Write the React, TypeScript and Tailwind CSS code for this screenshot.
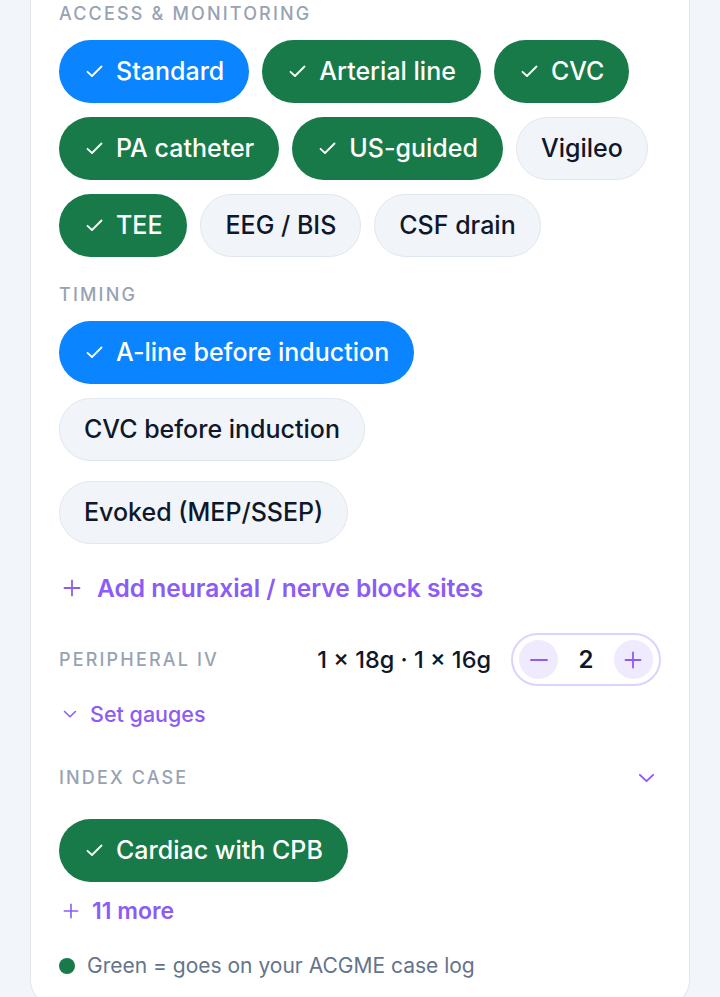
import React from "react";

type ChipTone = "blue" | "green" | "plain";

function CheckMark() {
    return (
        <svg width="17" height="13" viewBox="0 0 17 13" fill="none" className="shrink-0">
            <path d="M1.5 6.8 L6 11 L15.5 1.5" stroke="currentColor" strokeWidth="1.8" strokeLinecap="round" strokeLinejoin="round" />
        </svg>
    );
}

function Chip({ label, tone }: { label: string; tone: ChipTone }) {
    const base = "h-[63px] rounded-full flex items-center gap-[13px] text-[25px] font-medium whitespace-nowrap";
    if (tone === "plain") {
        return (
            <div className={`${base} px-[24px] bg-[#f1f4f9] border border-[#e1e7ef] text-[#0f172a]`}>
                {label}
            </div>
        );
    }
    return (
        <div className={`${base} ${tone === "blue" ? "bg-[#0a84ff]" : "bg-[#187a48]"} text-white pl-[27px] pr-[25px]`}>
            <CheckMark />
            {label}
        </div>
    );
}

function Label({ children }: { children: React.ReactNode }) {
    return (
        <div className="text-[18px] leading-[24px] font-medium tracking-[0.12em] text-[#97a3b3] uppercase">
            {children}
        </div>
    );
}

function PlusIcon({ size = 18 }: { size?: number }) {
    return (
        <svg width={size} height={size} viewBox="0 0 18 18" fill="none" className="shrink-0">
            <path d="M9 1.5 V16.5 M1.5 9 H16.5" stroke="currentColor" strokeWidth="1.8" strokeLinecap="round" />
        </svg>
    );
}

function ChevronDown({ size = 16 }: { size?: number }) {
    return (
        <svg width={size} height={size * 0.6} viewBox="0 0 16 10" fill="none" className="shrink-0">
            <path d="M1.5 1.8 L8 8 L14.5 1.8" stroke="currentColor" strokeWidth="1.9" strokeLinecap="round" strokeLinejoin="round" />
        </svg>
    );
}

export default function App() {
    return (
        <div className="min-h-screen bg-[#f2f5f9] px-[30px]" style={{ fontFamily: "Inter, 'Noto Sans', sans-serif" }}>
            <div className="bg-white border border-t-0 border-[#e2e7ee] rounded-b-[28px] px-[28px] pt-[2px] pb-[28px]">

                {/* ACCESS & MONITORING */}
                <Label>Access &amp; Monitoring</Label>
                <div className="flex flex-wrap gap-x-[13px] gap-y-[14px] mt-[14px]">
                    <Chip label="Standard" tone="blue" />
                    <Chip label="Arterial line" tone="green" />
                    <Chip label="CVC" tone="green" />
                    <Chip label="PA catheter" tone="green" />
                    <Chip label="US-guided" tone="green" />
                    <Chip label="Vigileo" tone="plain" />
                    <Chip label="TEE" tone="green" />
                    <Chip label="EEG / BIS" tone="plain" />
                    <Chip label="CSF drain" tone="plain" />
                </div>

                {/* TIMING */}
                <div className="mt-[26px]">
                    <Label>Timing</Label>
                </div>
                <div className="flex flex-wrap gap-x-[13px] gap-y-[14px] mt-[14px]">
                    <Chip label="A-line before induction" tone="blue" />
                    <Chip label="CVC before induction" tone="plain" />
                </div>
                <div className="flex flex-wrap mt-[20px]">
                    <Chip label="Evoked (MEP/SSEP)" tone="plain" />
                </div>

                <div className="flex items-center gap-[16px] mt-[29px] pl-[4px] text-[#8b5cf6] text-[24.5px] leading-[30px] font-semibold">
                    <PlusIcon />
                    <span>Add neuraxial / nerve block sites</span>
                </div>

                {/* PERIPHERAL IV */}
                <div className="flex items-center mt-[30px]">
                    <div className="flex-1">
                        <Label>Peripheral IV</Label>
                    </div>
                    <div className="text-[23.5px] font-medium text-[#0f172a] mr-[20px]">1 × 18g · 1 × 16g</div>
                    <div className="h-[53px] w-[150px] rounded-full border-2 border-[#dcd2fd] flex items-center justify-between px-[6px]">
                        <button className="w-[39px] h-[39px] rounded-full bg-[#efeafe] text-[#8b5cf6] flex items-center justify-center">
                            <svg width="18" height="2" viewBox="0 0 18 2"><path d="M1 1 H17" stroke="currentColor" strokeWidth="1.8" strokeLinecap="round" /></svg>
                        </button>
                        <span className="text-[24px] font-semibold text-[#0f172a]">2</span>
                        <button className="w-[39px] h-[39px] rounded-full bg-[#efeafe] text-[#8b5cf6] flex items-center justify-center">
                            <PlusIcon />
                        </button>
                    </div>
                </div>

                <div className="flex items-center gap-[13px] mt-[14px] pl-[4px] text-[#8b5cf6] text-[21.5px] leading-[28px] font-medium">
                    <ChevronDown size={14} />
                    <span>Set gauges</span>
                </div>

                {/* INDEX CASE */}
                <div className="flex items-center justify-between mt-[38px] pr-[6px]">
                    <Label>Index Case</Label>
                    <span className="text-[#8b5cf6]"><ChevronDown size={17} /></span>
                </div>
                <div className="flex flex-wrap mt-[29px]">
                    <Chip label="Cardiac with CPB" tone="green" />
                </div>

                <div className="flex items-center gap-[13px] mt-[15px] pl-[4px] text-[#8b5cf6] text-[23px] leading-[28px] font-semibold">
                    <PlusIcon size={16} />
                    <span>11 more</span>
                </div>

                <div className="flex items-center gap-[12px] mt-[28px] text-[21px] leading-[26px] text-[#64748b]">
                    <span className="w-[16px] h-[16px] rounded-full bg-[#187a48] shrink-0" />
                    <span>Green = goes on your ACGME case log</span>
                </div>
            </div>
        </div>
    );
}
